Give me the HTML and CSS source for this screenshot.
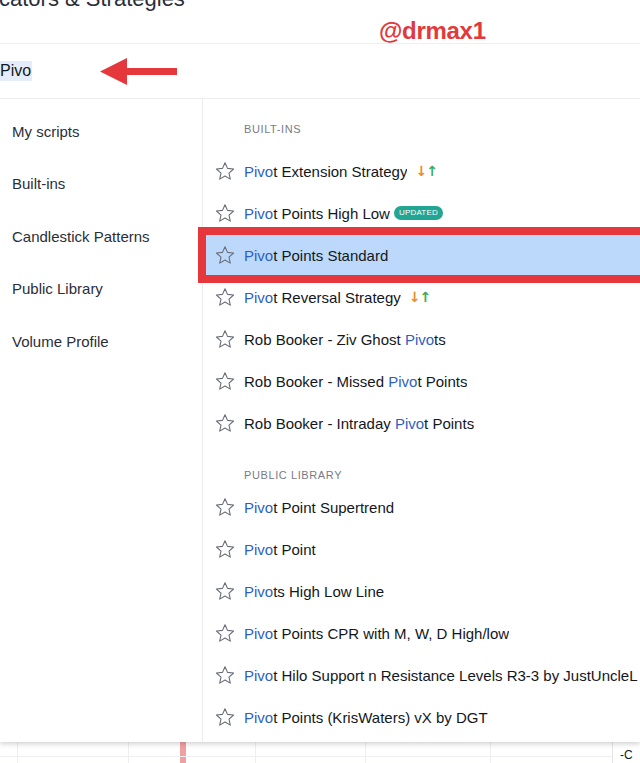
FILE: index.html
```html
<!DOCTYPE html>
<html lang="en">
<head>
<meta charset="utf-8">
<title>Indicators &amp; Strategies</title>
<link rel="stylesheet" href="styles.css">
</head>
<body>
<div class="dialog">
  <header class="title-bar">
    <h1 class="title">cators &amp; Strategies</h1>
    <span class="watermark">@drmax1</span>
  </header>
  <div class="search">
    <span class="query">Pivo</span>
    <svg class="arrow" width="78" height="28" viewBox="0 0 78 28">
      <polygon points="0,13.5 27,0 27,10 77,10 77,17 27,17 27,27" fill="#e5383c"/>
    </svg>
  </div>
  <div class="body">
    <nav class="sidebar">
      <div class="cat">My scripts</div>
      <div class="cat">Built-ins</div>
      <div class="cat">Candlestick Patterns</div>
      <div class="cat">Public Library</div>
      <div class="cat">Volume Profile</div>
    </nav>
    <div class="results">
      <div class="section first">BUILT-INS</div>
      <div class="row"><svg class="star" viewBox="0 0 20 20"><path d="M10 1.8l2.5 5.6 6.1.6-4.6 4.1 1.3 6-5.3-3.1-5.3 3.1 1.3-6-4.6-4.1 6.1-.6z"/></svg><span class="name"><span class="hl">Pivo</span>t Extension Strategy</span><span class="ls"><span class="dn">↓</span><span class="up">↑</span></span></div>
      <div class="row"><svg class="star" viewBox="0 0 20 20"><path d="M10 1.8l2.5 5.6 6.1.6-4.6 4.1 1.3 6-5.3-3.1-5.3 3.1 1.3-6-4.6-4.1 6.1-.6z"/></svg><span class="name"><span class="hl">Pivo</span>t Points High Low</span><span class="badge">UPDATED</span></div>
      <div class="row active"><svg class="star" viewBox="0 0 20 20"><path d="M10 1.8l2.5 5.6 6.1.6-4.6 4.1 1.3 6-5.3-3.1-5.3 3.1 1.3-6-4.6-4.1 6.1-.6z"/></svg><span class="name"><span class="hl">Pivo</span>t Points Standard</span><span class="mark"></span></div>
      <div class="row"><svg class="star" viewBox="0 0 20 20"><path d="M10 1.8l2.5 5.6 6.1.6-4.6 4.1 1.3 6-5.3-3.1-5.3 3.1 1.3-6-4.6-4.1 6.1-.6z"/></svg><span class="name"><span class="hl">Pivo</span>t Reversal Strategy</span><span class="ls"><span class="dn">↓</span><span class="up">↑</span></span></div>
      <div class="row"><svg class="star" viewBox="0 0 20 20"><path d="M10 1.8l2.5 5.6 6.1.6-4.6 4.1 1.3 6-5.3-3.1-5.3 3.1 1.3-6-4.6-4.1 6.1-.6z"/></svg><span class="name">Rob Booker - Ziv Ghost <span class="hl">Pivo</span>ts</span></div>
      <div class="row"><svg class="star" viewBox="0 0 20 20"><path d="M10 1.8l2.5 5.6 6.1.6-4.6 4.1 1.3 6-5.3-3.1-5.3 3.1 1.3-6-4.6-4.1 6.1-.6z"/></svg><span class="name">Rob Booker - Missed <span class="hl">Pivo</span>t Points</span></div>
      <div class="row"><svg class="star" viewBox="0 0 20 20"><path d="M10 1.8l2.5 5.6 6.1.6-4.6 4.1 1.3 6-5.3-3.1-5.3 3.1 1.3-6-4.6-4.1 6.1-.6z"/></svg><span class="name">Rob Booker - Intraday <span class="hl">Pivo</span>t Points</span></div>
      <div class="section second">PUBLIC LIBRARY</div>
      <div class="row"><svg class="star" viewBox="0 0 20 20"><path d="M10 1.8l2.5 5.6 6.1.6-4.6 4.1 1.3 6-5.3-3.1-5.3 3.1 1.3-6-4.6-4.1 6.1-.6z"/></svg><span class="name"><span class="hl">Pivo</span>t Point Supertrend</span></div>
      <div class="row"><svg class="star" viewBox="0 0 20 20"><path d="M10 1.8l2.5 5.6 6.1.6-4.6 4.1 1.3 6-5.3-3.1-5.3 3.1 1.3-6-4.6-4.1 6.1-.6z"/></svg><span class="name"><span class="hl">Pivo</span>t Point</span></div>
      <div class="row"><svg class="star" viewBox="0 0 20 20"><path d="M10 1.8l2.5 5.6 6.1.6-4.6 4.1 1.3 6-5.3-3.1-5.3 3.1 1.3-6-4.6-4.1 6.1-.6z"/></svg><span class="name"><span class="hl">Pivo</span>ts High Low Line</span></div>
      <div class="row"><svg class="star" viewBox="0 0 20 20"><path d="M10 1.8l2.5 5.6 6.1.6-4.6 4.1 1.3 6-5.3-3.1-5.3 3.1 1.3-6-4.6-4.1 6.1-.6z"/></svg><span class="name"><span class="hl">Pivo</span>t Points CPR with M, W, D High/low</span></div>
      <div class="row"><svg class="star" viewBox="0 0 20 20"><path d="M10 1.8l2.5 5.6 6.1.6-4.6 4.1 1.3 6-5.3-3.1-5.3 3.1 1.3-6-4.6-4.1 6.1-.6z"/></svg><span class="name"><span class="hl">Pivo</span>t Hilo Support n Resistance Levels R3-3 by JustUncleL</span></div>
      <div class="row"><svg class="star" viewBox="0 0 20 20"><path d="M10 1.8l2.5 5.6 6.1.6-4.6 4.1 1.3 6-5.3-3.1-5.3 3.1 1.3-6-4.6-4.1 6.1-.6z"/></svg><span class="name"><span class="hl">Pivo</span>t Points (KrisWaters) vX by DGT</span></div>
    </div>
  </div>
</div>
<div class="chart">
  <span class="vline" style="left:17px"></span>
  <span class="vline" style="left:128px"></span>
  <span class="vline" style="left:255px"></span>
  <span class="vline" style="left:365px"></span>
  <span class="vline" style="left:490px"></span>
  <span class="candle"></span>
  <span class="axis"></span>
  <span class="axis-label">-C</span>
</div>
</body>
</html>
```

FILE: styles.css
```css
* { box-sizing: border-box; }
html, body { margin: 0; padding: 0; }
body {
  width: 640px;
  height: 763px;
  overflow: hidden;
  background: #fff;
  font-family: "Liberation Sans", Arial, sans-serif;
  color: #131722;
}
.dialog {
  position: relative;
  z-index: 2;
  height: 742px;
  background: #fff;
  box-shadow: 0 2px 5px rgba(0,0,0,0.18);
  display: flex;
  flex-direction: column;
}
.title-bar {
  position: relative;
  height: 44px;
  border-bottom: 1px solid #efefef;
  overflow: hidden;
  flex: none;
}
.title {
  margin: -12px 0 0 -1px;
  font-size: 22px;
  line-height: 22px;
  font-weight: 400;
  color: #2a2e39;
  white-space: nowrap;
}
.watermark {
  position: absolute;
  left: 379px;
  top: 17px;
  font-size: 24px;
  line-height: 28px;
  font-weight: 700;
  color: #e2393d;
  letter-spacing: -0.3px;
}
.search {
  height: 55px;
  border-bottom: 1px solid #ececec;
  display: flex;
  align-items: center;
  flex: none;
}
.query {
  font-size: 16px;
  line-height: 20px;
  background: #e4edf9;
  padding: 0 1px 0 0;
  margin-top: -1px;
}
.arrow {
  margin-left: 68px;
  margin-top: 2px;
}
.body {
  flex: 1;
  display: flex;
  min-height: 0;
}
.sidebar {
  width: 203px;
  flex: none;
  border-right: 1px solid #ececec;
  padding-top: 6px;
}
.cat {
  height: 52.5px;
  display: flex;
  align-items: center;
  padding-left: 12px;
  font-size: 15px;
  color: #2a2e39;
}
.results {
  flex: 1;
  min-width: 0;
}
.section {
  font-size: 11px;
  letter-spacing: 0.6px;
  color: #787b86;
  padding-left: 41px;
  line-height: 16px;
}
.section.first { padding-top: 22px; height: 51px; }
.section.second { padding-top: 23px; height: 42px; }
.row {
  position: relative;
  height: 42px;
  display: flex;
  align-items: center;
  padding-left: 12px;
  font-size: 15px;
  white-space: nowrap;
}
.row.active { background: #bcd9fb; }
.mark {
  position: absolute;
  left: -5px;
  top: -7px;
  right: -8px;
  bottom: -7px;
  border: 8px solid #e5373c;
}
.star {
  width: 20px;
  height: 20px;
  flex: none;
  fill: none;
  stroke: #6a6d78;
  stroke-width: 1.1;
  stroke-linejoin: round;
  margin-right: 9px;
}
.name { overflow: hidden; }
.hl { color: #2e5fc0; }
.ls {
  margin-left: 8px;
  font-family: "DejaVu Sans", sans-serif;
  font-size: 14px;
  font-weight: 700;
  letter-spacing: -1px;
}
.dn { color: #f08a24; }
.up { color: #3bab5a; }
.badge {
  margin-left: 4px;
  background: #22a593;
  color: #fff;
  font-size: 8px;
  line-height: 14px;
  height: 14px;
  padding: 0 5px;
  border-radius: 7px;
  letter-spacing: 0.2px;
}
.chart {
  position: relative;
  height: 21px;
  background: #fff;
}
.vline {
  position: absolute;
  top: 0;
  bottom: 0;
  width: 1px;
  background: #eeeff2;
}
.chart::after {
  content: "";
  position: absolute;
  left: 0;
  right: 28px;
  top: 14px;
  height: 1px;
  background: #eeeff2;
}
.candle {
  position: absolute;
  left: 180px;
  top: 0;
  bottom: 0;
  width: 6px;
  background: #f0a0a3;
}
.axis {
  position: absolute;
  left: 612px;
  top: 0;
  bottom: 0;
  width: 1px;
  background: #e4e5e8;
}
.axis-label {
  position: absolute;
  left: 620px;
  top: 6px;
  font-size: 12px;
  color: #131722;
}
```
